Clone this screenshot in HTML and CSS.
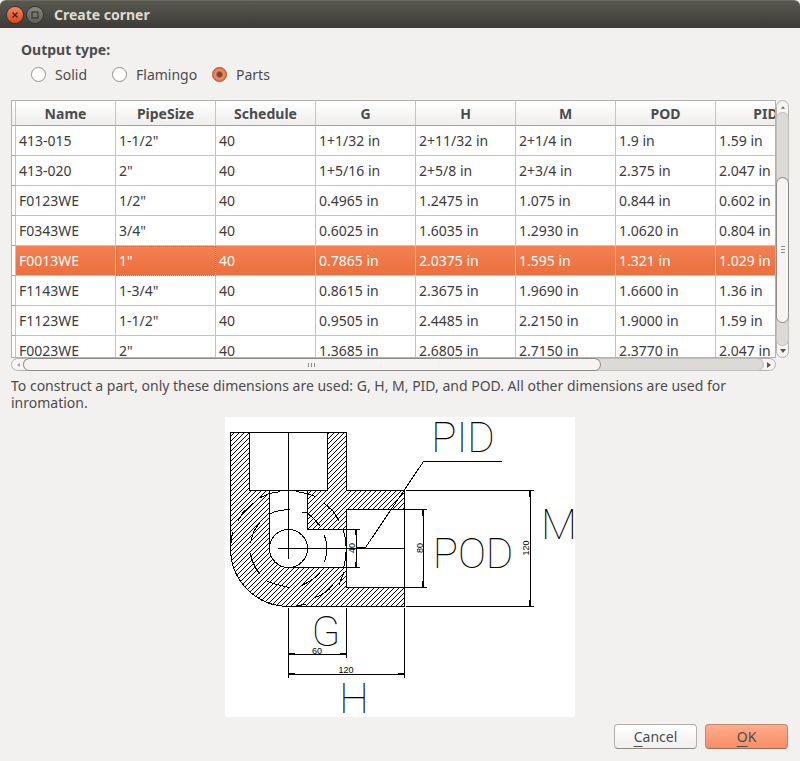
FILE: index.html
```html
<!DOCTYPE html>
<html lang="en">
<head>
<meta charset="utf-8">
<title>Create corner</title>
<link rel="stylesheet" href="styles.css">
</head>
<body>
<div class="dialog">
  <header class="titlebar">
    <button class="win-btn close" type="button" aria-label="Close">
      <svg viewBox="0 0 16 16" width="16" height="16"><path d="M5.5 5.5l5 5M10.5 5.5l-5 5" stroke="#47271b" stroke-width="1.4" fill="none"/></svg>
    </button>
    <button class="win-btn maximize" type="button" aria-label="Maximize">
      <svg viewBox="0 0 16 16" width="16" height="16"><rect x="5" y="5" width="6" height="6" stroke="#383732" stroke-width="1.2" fill="none"/></svg>
    </button>
    <h1 class="title">Create corner</h1>
  </header>

  <form class="content">
    <fieldset class="output">
      <legend>Output type:</legend>
      <div class="radios">
        <label class="option option-solid"><input type="radio" name="output">Solid</label>
        <label class="option option-flamingo"><input type="radio" name="output">Flamingo</label>
        <label class="option"><input type="radio" name="output" checked>Parts</label>
      </div>
    </fieldset>

    <div class="table-area">
      <div class="viewport">
        <table class="parts">
          <colgroup><col class="stub"><col span="8"></colgroup>
          <thead>
            <tr><td></td><th>Name</th><th>PipeSize</th><th>Schedule</th><th>G</th><th>H</th><th>M</th><th>POD</th><th>PID</th></tr>
          </thead>
          <tbody>
            <tr><td></td><td>413-015</td><td>1-1/2"</td><td>40</td><td>1+1/32 in</td><td>2+11/32 in</td><td>2+1/4 in</td><td>1.9 in</td><td>1.59 in</td></tr>
            <tr><td></td><td>413-020</td><td>2"</td><td>40</td><td>1+5/16 in</td><td>2+5/8 in</td><td>2+3/4 in</td><td>2.375 in</td><td>2.047 in</td></tr>
            <tr><td></td><td>F0123WE</td><td>1/2"</td><td>40</td><td>0.4965 in</td><td>1.2475 in</td><td>1.075 in</td><td>0.844 in</td><td>0.602 in</td></tr>
            <tr><td></td><td>F0343WE</td><td>3/4"</td><td>40</td><td>0.6025 in</td><td>1.6035 in</td><td>1.2930 in</td><td>1.0620 in</td><td>0.804 in</td></tr>
            <tr class="selected"><td></td><td>F0013WE</td><td class="current">1"</td><td>40</td><td>0.7865 in</td><td>2.0375 in</td><td>1.595 in</td><td>1.321 in</td><td>1.029 in</td></tr>
            <tr><td></td><td>F1143WE</td><td>1-3/4"</td><td>40</td><td>0.8615 in</td><td>2.3675 in</td><td>1.9690 in</td><td>1.6600 in</td><td>1.36 in</td></tr>
            <tr><td></td><td>F1123WE</td><td>1-1/2"</td><td>40</td><td>0.9505 in</td><td>2.4485 in</td><td>2.2150 in</td><td>1.9000 in</td><td>1.59 in</td></tr>
            <tr><td></td><td>F0023WE</td><td>2"</td><td>40</td><td>1.3685 in</td><td>2.6805 in</td><td>2.7150 in</td><td>2.3770 in</td><td>2.047 in</td></tr>
          </tbody>
        </table>
      </div>
      <div class="scroll vertical">
        <button class="arrow" type="button" aria-label="Scroll up"><svg viewBox="0 0 6 4" width="4" height="3"><path d="M0 4L3 0L6 4z" fill="#666"/></svg></button>
        <div class="track">
          <div class="thumb"><svg viewBox="0 0 4 8" width="4" height="8"><path d="M0 .5h4M0 3.500h4M0 6.500h4" stroke="#8c8b89"/></svg></div>
        </div>
        <button class="arrow" type="button" aria-label="Scroll down"><svg viewBox="0 0 6 4" width="6" height="4"><path d="M0 0L3 4L6 0z" fill="#555"/></svg></button>
      </div>
      <div class="scroll horizontal">
        <button class="arrow" type="button" aria-label="Scroll left"><svg viewBox="0 0 4 6" width="3" height="4"><path d="M4 0L0 3L4 6z" fill="#999"/></svg></button>
        <div class="track">
          <div class="thumb"><svg viewBox="0 0 8 4" width="8" height="4"><path d="M.5 0v4M3.500 0v4M6.500 0v4" stroke="#8c8b89"/></svg></div>
        </div>
        <button class="arrow" type="button" aria-label="Scroll right"><svg viewBox="0 0 4 6" width="4" height="6"><path d="M0 0L4 3L0 6z" fill="#555"/></svg></button>
      </div>
    </div>

    <p class="note">To construct a part, only these dimensions are used: G, H, M, PID, and POD. All other dimensions are used for inromation.</p>

    <svg class="drawing" viewBox="0 0 350 300" width="350" height="300" role="img" aria-label="Corner section with dimensions">
      <defs>
        <pattern id="hatch" width="5" height="5" patternUnits="userSpaceOnUse">
          <path d="M0 4h1v1h-1zM1 3h1v1h-1zM2 2h1v1h-1zM3 1h1v1h-1zM4 0h1v1h-1z" fill="#000"/>
        </pattern>
      </defs>
      <rect width="350" height="300" fill="#fff"/>
      <g shape-rendering="crispEdges" fill="none" stroke="#000">
        <!-- sectioned body -->
        <path fill="url(#hatch)" d="M5.500 15.500H24.500V73.500H44.500V131.500A19 19 0 0 0 63.500 150.500H121.500V170.500H179.500V189.500H63.500A58 58 0 0 1 5.500 131.500z"/>
        <path fill="url(#hatch)" d="M102.500 15.500H121.500V73.500H179.500V92.500H121.500V112.500H82.500V73.500H102.500z"/>
        <path d="M24.500 15.500H102.500M44.500 73.500H82.500M179.500 92.500V170.500M121.500 92.500V170.500"/>
        <circle cx="63.500" cy="131.500" r="19"/>
        <!-- hidden bore and shoulder -->
        <path d="M35.500 80.500L44 76.500L55.500 74.500M71.500 74.500L82 76.500L90 79.500M12.500 104.500L18 95.500L28 86.500M99.500 86.500L108 94L114 103.500M7.500 115.500L5.500 129M118.500 113.500Q124 132 118.500 151M114 167.500Q117 160 119 155M90 180.500Q101 177 108 168M71.500 188.500L81 187.500"/>
        <path d="M45.500 96.500Q52 93 65.500 92.500M76.500 95.500H81.500L87 100L95 108.500M35.500 105.500Q28 112 25.500 126M25.500 136.500Q28 150 35.500 157.500M42.500 164.500Q52 168 64.500 170.500M76.500 168.500Q87 164 94.500 156.500M99.500 118.500Q104 131 99.500 145.500"/>
        <!-- centre lines -->
        <path d="M63.500 15V142M53 131.500H179"/>
        <!-- leader -->
        <path d="M132 130.500H140.500L198.500 44.500H277"/>
        <!-- vertical dimensions -->
        <path d="M121 112.500H135M121 150.500H135M131.500 112V151M180 92.500H202M180 170.500H202M198.500 92V171M181 73.500H309M181 189.500H309M305.500 73V190"/>
        <path stroke-width="2" d="M131 113v5M131 145v5M198 93v6M198 164v6M305 74v6M305 183v6"/>
        <!-- horizontal dimensions -->
        <path d="M63.500 191V261M121.500 191V241M179.500 191V261M63 237.500H122M63 257.500H180"/>
        <path stroke-width="2" d="M64 237h6M115 237h6M64 257h6M173 257h6"/>
      </g>
      <g class="big">
        <text x="238" y="35">PID</text>
        <text x="248" y="151">POD</text>
        <text x="334" y="122">M</text>
        <text x="101" y="229">G</text>
        <text x="129" y="296">H</text>
      </g>
      <g class="small">
        <text x="92" y="237">60</text>
        <text x="121" y="256">120</text>
        <text transform="translate(130 131) rotate(-90)">40</text>
        <text transform="translate(198 131) rotate(-90)">80</text>
        <text transform="translate(304 131) rotate(-90)">120</text>
      </g>
    </svg>

    <div class="actions">
      <button class="btn" type="button"><u>C</u>ancel</button>
      <button class="btn primary" type="submit"><u>O</u>K</button>
    </div>
  </form>
</div>
</body>
</html>
```

FILE: styles.css
```css
* { box-sizing: border-box; }

body {
  margin: 0;
  background: #f2f1f0;
  color: #4c4c4c;
  font: 14px/17px "Noto Sans", "Open Sans", sans-serif;
}

.dialog {
  display: flex;
  flex-direction: column;
  min-height: 100vh;
}

.titlebar {
  display: flex;
  align-items: center;
  gap: 4px;
  height: 28px;
  padding: 0 7px;
  border-top: 1px solid #6b6a63;
  border-radius: 6px 6px 0 0;
  background: linear-gradient(#59584f, #3c3b37);
}

.title {
  margin: 0 0 0 7px;
  color: #dfdbd2;
  font-size: 14px;
  font-weight: 700;
}

.win-btn {
  width: 16px;
  height: 16px;
  padding: 0;
  border: 0;
  border-radius: 50%;
  box-shadow: 0 0 0 1px #33322e;
}
.win-btn svg { display: block; }
.close { background: linear-gradient(#f68563, #dd4814); }
.maximize { background: linear-gradient(#8a8981, #5f5e57); }

.content {
  display: flex;
  flex: 1;
  flex-direction: column;
  padding: 13px 11px 12px;
}

.output {
  margin: 0;
  padding: 0 10px;
  border: 0;
}
.output legend {
  padding: 0;
  font-weight: 700;
}
.radios {
  display: flex;
  padding: 8px 0 0 10px;
}
.option {
  display: flex;
  align-items: center;
  gap: 9px;
}
.option-solid { width: 81px; }
.option-flamingo { width: 100px; }
.option input {
  width: 15px;
  height: 15px;
  margin: 0;
  appearance: none;
  border: 1px solid #92908d;
  border-radius: 50%;
  background: #fff;
}
.option input:checked {
  border-color: #a9502f;
  background: radial-gradient(circle, #7a4632 0 2px, #f58a62 4px, #ee6c3c 7px);
}

.table-area {
  display: grid;
  grid-template-columns: 1fr 13px;
  grid-template-rows: 258px 13px;
  margin-top: 17px;
}
.viewport {
  overflow: hidden;
  border: 1px solid #b4b2af;
  background: #fff;
}

.parts {
  width: 804px;
  table-layout: fixed;
  border-spacing: 0;
  color: #3c3c3c;
}
.parts .stub { width: 4px; }
.parts th,
.parts td {
  height: 30px;
  padding: 0 3px;
  border-right: 1px solid #c6c4c2;
  border-bottom: 1px solid #c6c4c2;
  white-space: nowrap;
}
.parts td:first-child {
  padding: 0;
  border-bottom-color: #a5a3a0;
}
.parts thead th,
.parts thead td {
  height: 25px;
  border-bottom-color: #a5a3a0;
  background: linear-gradient(#fff, #efeeed);
  color: #4c4c4c;
}
.parts .selected td:not(:first-child) {
  background: linear-gradient(#f58051, #ea6f3e);
  color: #fff;
}
.parts .current {
  outline: 1px dotted #8c8378;
  outline-offset: -1px;
}

.scroll {
  display: flex;
  border: 1px solid #b4b2af;
  border-radius: 7px;
  background: #f6f5f4;
}
.vertical { flex-direction: column; }
.arrow {
  display: flex;
  flex: 0 0 12px;
  align-items: center;
  justify-content: center;
  padding: 0;
  border: 0;
  background: none;
}
.track {
  display: flex;
  flex: 1;
  border-radius: 6px;
  background: #dcdad7;
  box-shadow: 0 0 0 1px #c1bfbc;
}
.vertical .track { flex-direction: column; }
.thumb {
  display: flex;
  align-items: center;
  justify-content: center;
  border-radius: 7px;
  background: #f5f4f3;
  box-shadow: 0 0 0 1px #8f8d89;
}
.vertical .thumb {
  height: 62%;
  margin-top: 65px;
}
.horizontal .thumb { width: 78%; }

.note {
  margin: 6px 0 0;
}

.drawing {
  display: block;
  align-self: center;
  margin-top: 6px;
}
.drawing text { text-anchor: middle; }
.big {
  font-family: Roboto, Lato, sans-serif;
  font-size: 42px;
  font-weight: 100;
}
.small {
  font-family: "Liberation Sans Narrow", "Liberation Sans", sans-serif;
  font-size: 9px;
}

.actions {
  display: flex;
  justify-content: flex-end;
  gap: 8px;
  margin-top: auto;
  padding-right: 1px;
}
.btn {
  width: 83px;
  height: 25px;
  padding: 0;
  border: 1px solid #b4b1ad;
  border-bottom-color: #8e8b87;
  border-radius: 4px;
  background: linear-gradient(#fff, #f0efee);
  color: #4c4c4c;
  font: inherit;
}
.btn u { text-underline-offset: 4px; }
.primary {
  border-color: #b98772;
  border-bottom-color: #a06a54;
  background: linear-gradient(#ffac8d, #f68e65);
}
```
